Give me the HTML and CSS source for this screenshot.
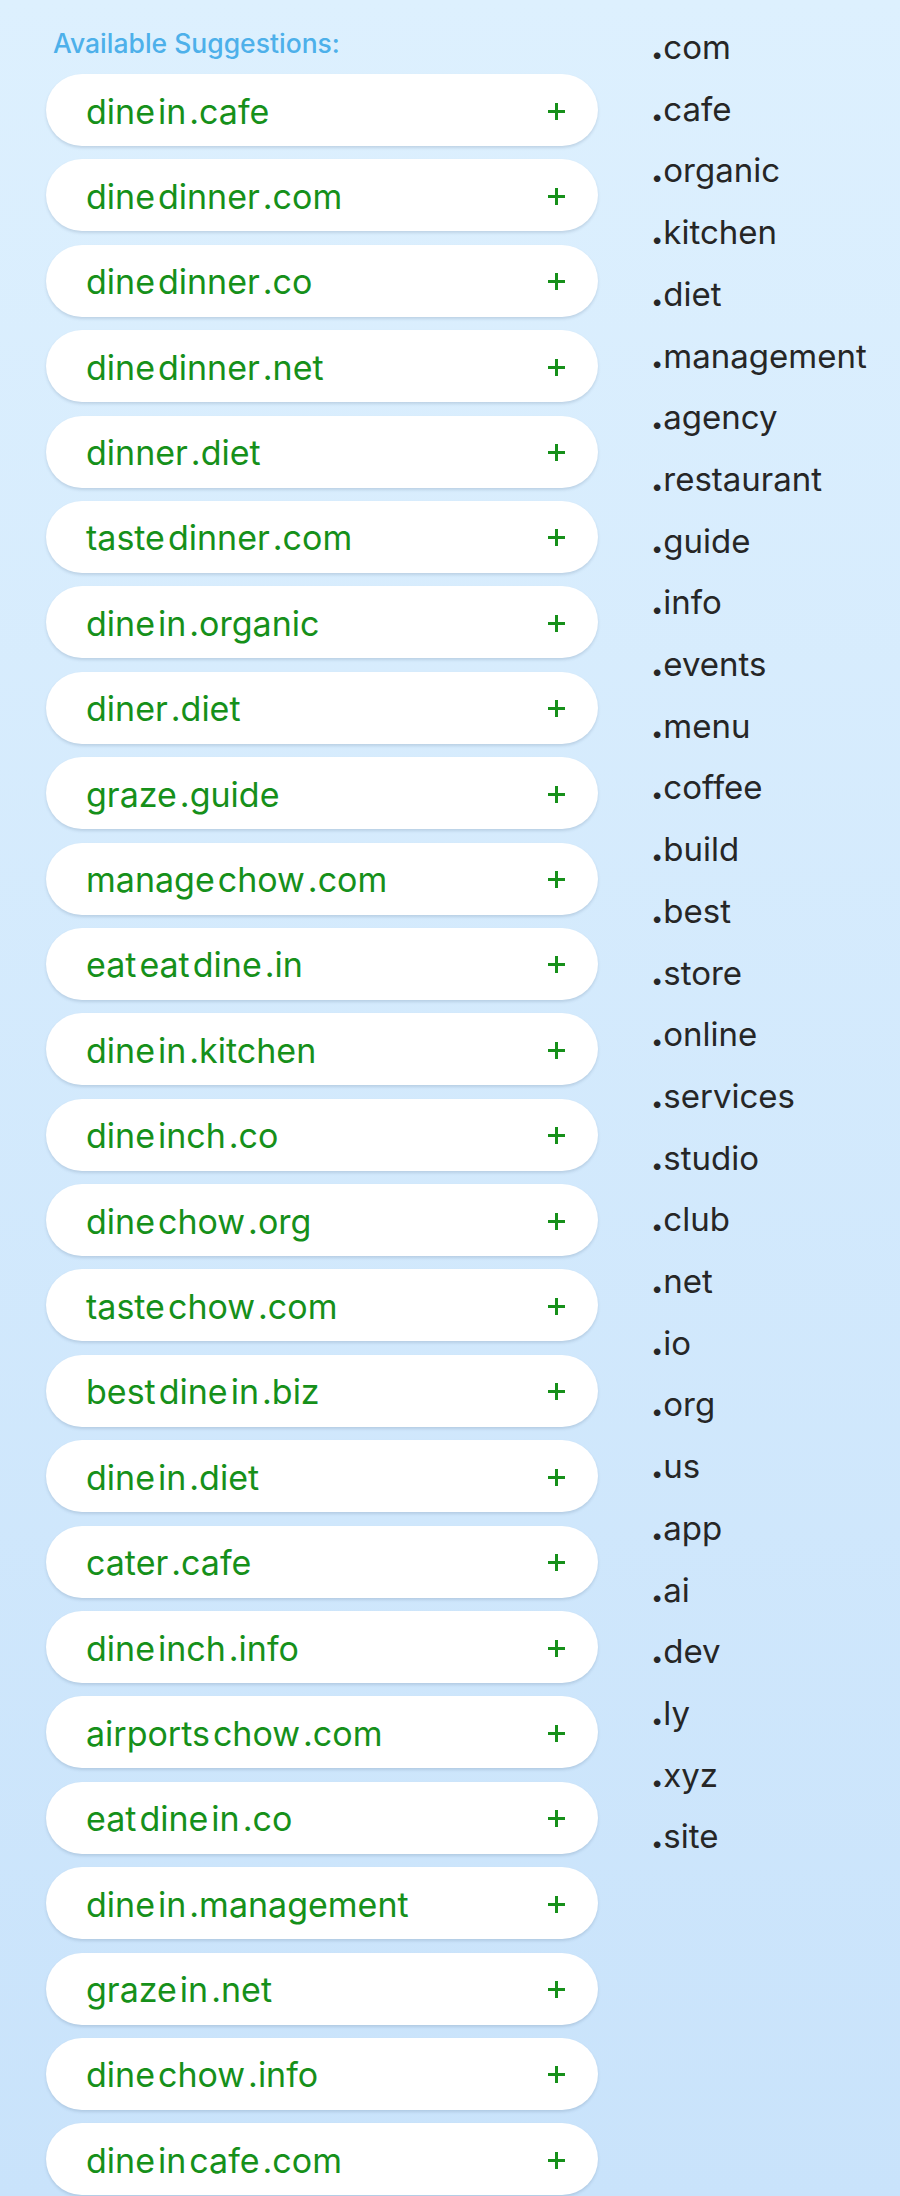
FILE: index.html
```html
<!DOCTYPE html>
<html>
<head>
<meta charset="utf-8">
<link rel="stylesheet" href="styles.css">
</head>
<body>
<div class="page">
  <div class="left">
    <div class="heading">Available Suggestions:</div>
    <ul class="cards">
      <li class="card"><span class="name"><span>dine</span><span>in</span><span>.cafe</span></span><span class="plus"></span></li>
      <li class="card"><span class="name"><span>dine</span><span>dinner</span><span>.com</span></span><span class="plus"></span></li>
      <li class="card"><span class="name"><span>dine</span><span>dinner</span><span>.co</span></span><span class="plus"></span></li>
      <li class="card"><span class="name"><span>dine</span><span>dinner</span><span>.net</span></span><span class="plus"></span></li>
      <li class="card"><span class="name"><span>dinner</span><span>.diet</span></span><span class="plus"></span></li>
      <li class="card"><span class="name"><span>taste</span><span>dinner</span><span>.com</span></span><span class="plus"></span></li>
      <li class="card"><span class="name"><span>dine</span><span>in</span><span>.organic</span></span><span class="plus"></span></li>
      <li class="card"><span class="name"><span>diner</span><span>.diet</span></span><span class="plus"></span></li>
      <li class="card"><span class="name"><span>graze</span><span>.guide</span></span><span class="plus"></span></li>
      <li class="card"><span class="name"><span>manage</span><span>chow</span><span>.com</span></span><span class="plus"></span></li>
      <li class="card"><span class="name"><span>eat</span><span>eat</span><span>dine</span><span>.in</span></span><span class="plus"></span></li>
      <li class="card"><span class="name"><span>dine</span><span>in</span><span>.kitchen</span></span><span class="plus"></span></li>
      <li class="card"><span class="name"><span>dine</span><span>inch</span><span>.co</span></span><span class="plus"></span></li>
      <li class="card"><span class="name"><span>dine</span><span>chow</span><span>.org</span></span><span class="plus"></span></li>
      <li class="card"><span class="name"><span>taste</span><span>chow</span><span>.com</span></span><span class="plus"></span></li>
      <li class="card"><span class="name"><span>best</span><span>dine</span><span>in</span><span>.biz</span></span><span class="plus"></span></li>
      <li class="card"><span class="name"><span>dine</span><span>in</span><span>.diet</span></span><span class="plus"></span></li>
      <li class="card"><span class="name"><span>cater</span><span>.cafe</span></span><span class="plus"></span></li>
      <li class="card"><span class="name"><span>dine</span><span>inch</span><span>.info</span></span><span class="plus"></span></li>
      <li class="card"><span class="name"><span>airports</span><span>chow</span><span>.com</span></span><span class="plus"></span></li>
      <li class="card"><span class="name"><span>eat</span><span>dine</span><span>in</span><span>.co</span></span><span class="plus"></span></li>
      <li class="card"><span class="name"><span>dine</span><span>in</span><span>.management</span></span><span class="plus"></span></li>
      <li class="card"><span class="name"><span>graze</span><span>in</span><span>.net</span></span><span class="plus"></span></li>
      <li class="card"><span class="name"><span>dine</span><span>chow</span><span>.info</span></span><span class="plus"></span></li>
      <li class="card"><span class="name"><span>dine</span><span>in</span><span>cafe</span><span>.com</span></span><span class="plus"></span></li>
    </ul>
  </div>
  <ul class="tlds">
    <li><b>.</b>com</li>
    <li><b>.</b>cafe</li>
    <li><b>.</b>organic</li>
    <li><b>.</b>kitchen</li>
    <li><b>.</b>diet</li>
    <li><b>.</b>management</li>
    <li><b>.</b>agency</li>
    <li><b>.</b>restaurant</li>
    <li><b>.</b>guide</li>
    <li><b>.</b>info</li>
    <li><b>.</b>events</li>
    <li><b>.</b>menu</li>
    <li><b>.</b>coffee</li>
    <li><b>.</b>build</li>
    <li><b>.</b>best</li>
    <li><b>.</b>store</li>
    <li><b>.</b>online</li>
    <li><b>.</b>services</li>
    <li><b>.</b>studio</li>
    <li><b>.</b>club</li>
    <li><b>.</b>net</li>
    <li><b>.</b>io</li>
    <li><b>.</b>org</li>
    <li><b>.</b>us</li>
    <li><b>.</b>app</li>
    <li><b>.</b>ai</li>
    <li><b>.</b>dev</li>
    <li><b>.</b>ly</li>
    <li><b>.</b>xyz</li>
    <li><b>.</b>site</li>
  </ul>
</div>
</body>
</html>
```

FILE: styles.css
```css
html, body {
  margin: 0;
  padding: 0;
}
body {
  width: 900px;
  height: 2196px;
  overflow: hidden;
  background: linear-gradient(180deg, #ddf0fe 0%, #c9e3fb 100%);
  font-family: Inter, Roboto, "Liberation Sans", sans-serif;
}
.page {
  display: flex;
  align-items: flex-start;
}
.left {
  width: 552px;
  margin-left: 46px;
  padding-top: 28px;
}
.heading {
  font-size: 26.5px;
  line-height: 30px;
  font-weight: 500;
  color: #4db0ea;
  padding-left: 7px;
  margin-bottom: 16px;
}
.cards {
  list-style: none;
  margin: 0;
  padding: 0;
  display: flex;
  flex-direction: column;
  gap: 13.4px;
}
.card {
  height: 72px;
  background: #ffffff;
  border-radius: 36px;
  box-shadow: 0 2px 3px rgba(60, 90, 120, 0.18);
  display: flex;
  align-items: center;
  justify-content: space-between;
  padding: 2px 33px 0 40px;
  box-sizing: border-box;
}
.name {
  display: flex;
  gap: 3px;
  font-size: 34px;
  color: #16901a;
}
.plus {
  position: relative;
  width: 17px;
  height: 17px;
}
.plus::before, .plus::after {
  content: "";
  position: absolute;
  background: #16901a;
}
.plus::before {
  left: 0;
  top: 7px;
  width: 17px;
  height: 3px;
}
.plus::after {
  left: 7px;
  top: 0;
  width: 3px;
  height: 17px;
}
.tlds {
  list-style: none;
  margin: 0 0 0 53px;
  padding: 17px 0 0 0;
  font-size: 33px;
  line-height: 61.7px;
  color: #262626;
}
.tlds b {
  font-weight: 900;
}
```
